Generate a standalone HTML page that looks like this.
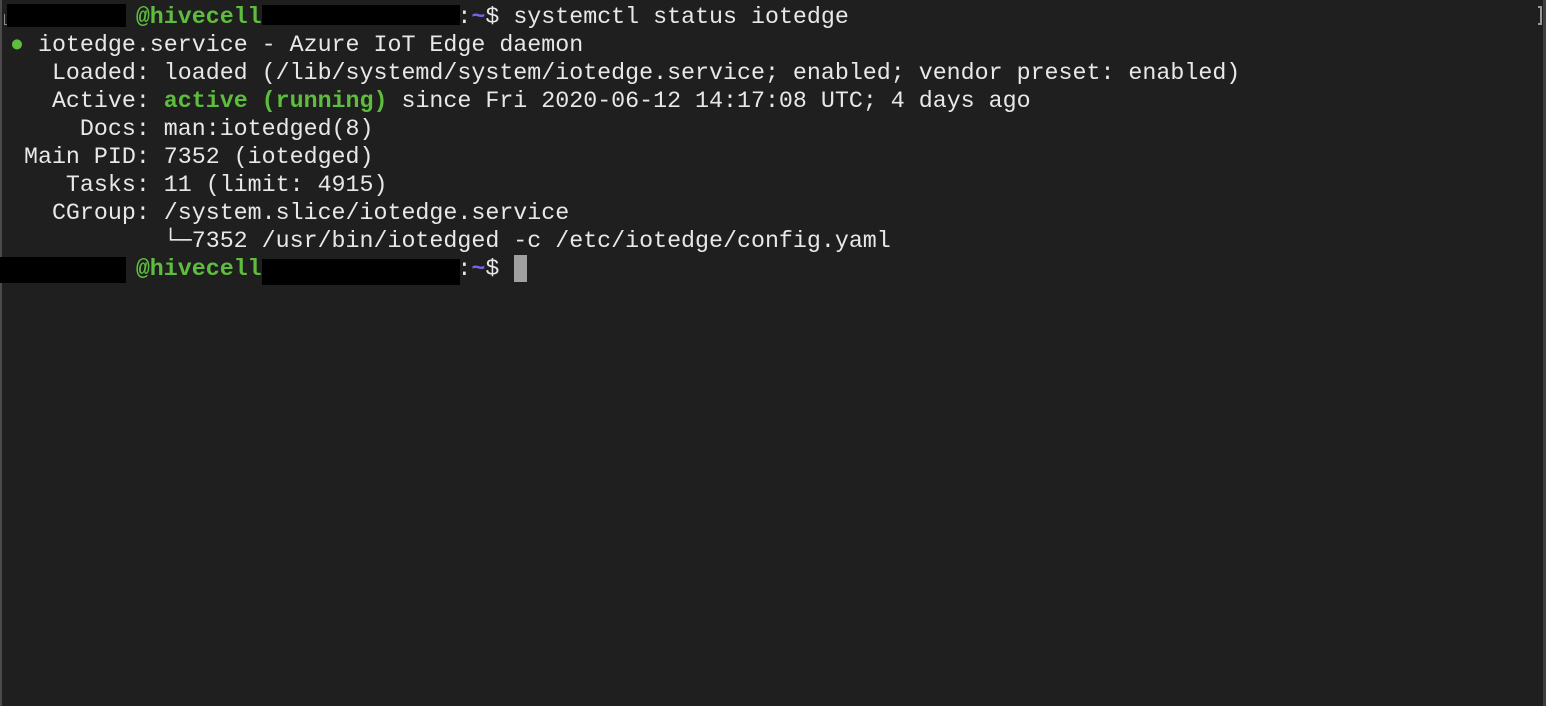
<!DOCTYPE html>
<html><head><meta charset="utf-8"><style>
html,body{margin:0;padding:0;}
body{width:1546px;height:706px;background:#1f1f1f;position:relative;overflow:hidden;}
.lb{position:absolute;left:0;top:0;width:2px;height:706px;background:#4a4a4a;}
.rb{position:absolute;right:0;top:0;width:3px;height:706px;background:#3e3e3e;}
pre{position:absolute;left:10px;top:3px;margin:0;font-family:"Liberation Mono",monospace;font-size:23.3px;line-height:28px;color:#e8e8e8;}
.g{color:#5fbd3e;font-weight:bold;}
.p{color:#7a63e8;font-weight:bold;}
.r{position:absolute;background:#000;}
.cur{position:absolute;left:514px;top:255px;width:13px;height:27px;background:#a0a0a0;}
.br{position:absolute;left:1538px;top:6px;width:4px;height:19px;border:2px solid #999;border-left:none;box-sizing:border-box;}
.bl{position:absolute;left:4px;top:14px;width:3px;height:10px;border:1px solid #888;border-right:none;border-top:none;}
</style></head><body>
<div class="lb"></div><div class="rb"></div>
<pre>         <span class="g">@hivecell</span>              :<span class="p">~</span>$ systemctl status iotedge
<span class="g">●</span> iotedge.service - Azure IoT Edge daemon
   Loaded: loaded (/lib/systemd/system/iotedge.service; enabled; vendor preset: enabled)
   Active: <span class="g">active (running)</span> since Fri 2020-06-12 14:17:08 UTC; 4 days ago
     Docs: man:iotedged(8)
 Main PID: 7352 (iotedged)
    Tasks: 11 (limit: 4915)
   CGroup: /system.slice/iotedge.service
           └─7352 /usr/bin/iotedged -c /etc/iotedge/config.yaml
         <span class="g">@hivecell</span>              :<span class="p">~</span>$ </pre>
<div class="bl"></div>
<div class="r" style="left:7px;top:4px;width:119px;height:23px"></div>
<div class="r" style="left:262px;top:5px;width:198px;height:20px"></div>
<div class="r" style="left:0;top:257px;width:126px;height:26px"></div>
<div class="r" style="left:262px;top:259px;width:198px;height:26px"></div>
<div class="cur"></div>
<div class="br"></div>
</body></html>
